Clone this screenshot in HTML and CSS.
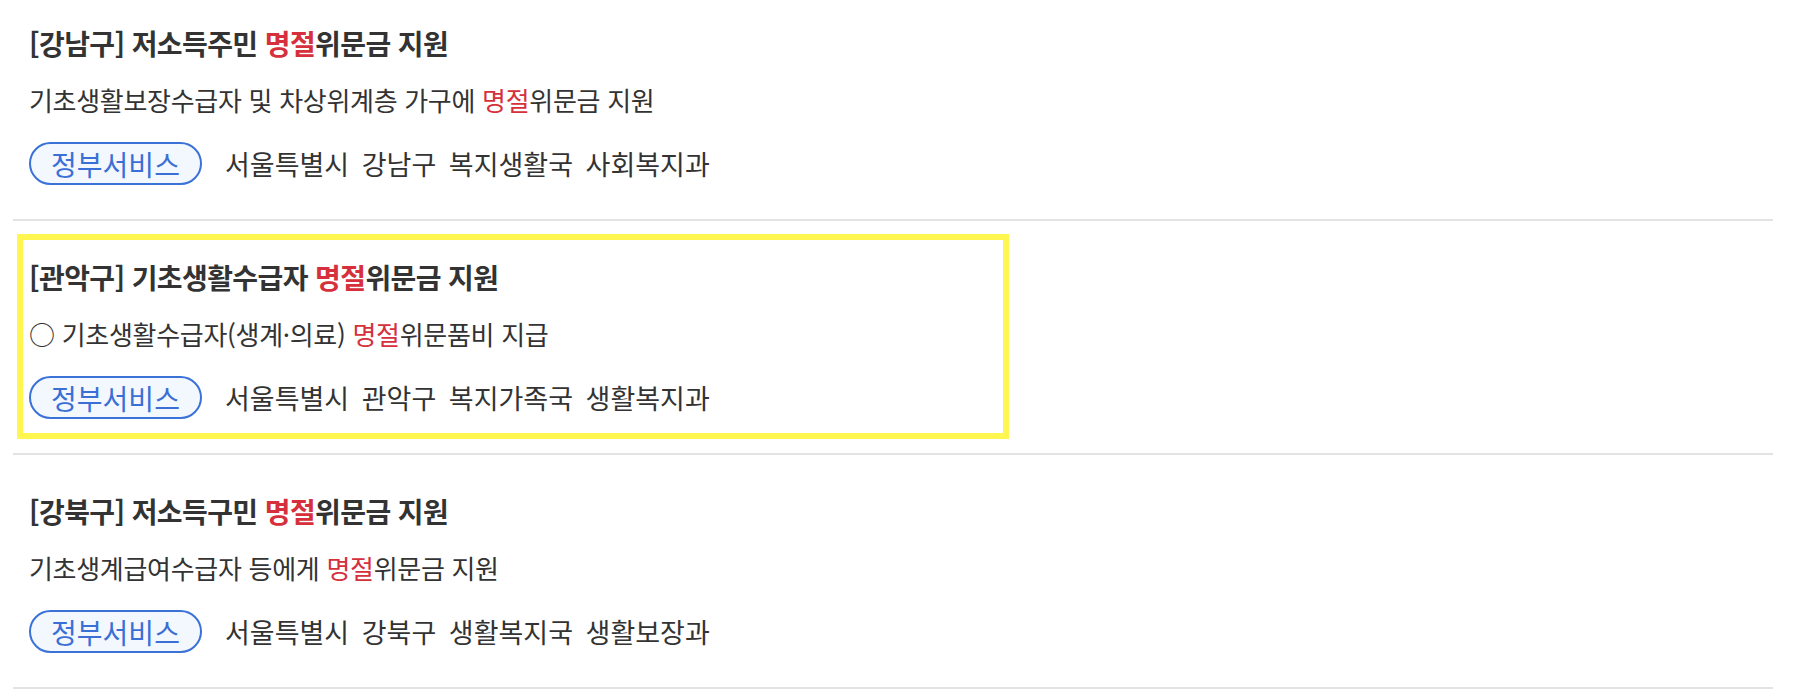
FILE: index.html
```html
<!DOCTYPE html>
<html lang="ko">
<head>
<meta charset="utf-8">
<title>명절위문금 검색 결과</title>
<link rel="stylesheet" href="styles.css">
</head>
<body>
<ul class="result-list">
  <li class="result-item">
    <a class="result-link" href="#">
      <h3 class="result-title">[강남구] 저소득주민 <em class="hl">명절</em>위문금 지원</h3>
      <p class="result-desc">기초생활보장수급자 및 차상위계층 가구에 <em class="hl">명절</em>위문금 지원</p>
      <div class="result-meta">
        <span class="badge">정부서비스</span>
        <span class="dept">서울특별시 강남구 복지생활국 사회복지과</span>
      </div>
    </a>
  </li>
  <li class="result-item">
    <a class="result-link is-focused" href="#">
      <h3 class="result-title">[관악구] 기초생활수급자 <em class="hl">명절</em>위문금 지원</h3>
      <p class="result-desc">○ 기초생활수급자(생계·의료) <em class="hl">명절</em>위문품비 지급</p>
      <div class="result-meta">
        <span class="badge">정부서비스</span>
        <span class="dept">서울특별시 관악구 복지가족국 생활복지과</span>
      </div>
    </a>
  </li>
  <li class="result-item">
    <a class="result-link" href="#">
      <h3 class="result-title">[강북구] 저소득구민 <em class="hl">명절</em>위문금 지원</h3>
      <p class="result-desc">기초생계급여수급자 등에게 <em class="hl">명절</em>위문금 지원</p>
      <div class="result-meta">
        <span class="badge">정부서비스</span>
        <span class="dept">서울특별시 강북구 생활복지국 생활보장과</span>
      </div>
    </a>
  </li>
</ul>
</body>
</html>
```

FILE: styles.css
```css
html, body {
  margin: 0;
  padding: 0;
  background: #ffffff;
  overflow: hidden;
}

body {
  font-family: "Noto Sans CJK KR", "Noto Sans", sans-serif;
  color: #333333;
}

.result-list {
  list-style: none;
  margin: -13px 0 0 13px;
  padding: 0;
  width: 1760px;
}

.result-item {
  padding: 19px 0 20px 4px;
  border-bottom: 2px solid #e3e3e3;
}

.result-link {
  display: block;
  width: 980px;
  margin-left: 6px;
  padding: 19px 0 14px 6px;
  box-sizing: border-box;
  text-decoration: none;
  color: inherit;
}

.result-link.is-focused {
  outline: 6px solid #fff650;
}

.result-title {
  margin: 0;
  font-size: 28px;
  line-height: 36px;
  font-weight: 700;
  color: #333333;
  letter-spacing: -0.6px;
  white-space: nowrap;
}

.hl {
  font-style: normal;
  color: #d6303c;
}

.result-desc {
  margin: 22px 0 0;
  font-size: 26px;
  line-height: 34px;
  color: #333333;
  letter-spacing: -0.3px;
  white-space: nowrap;
}

.result-meta {
  display: flex;
  align-items: center;
  gap: 23px;
  margin-top: 25px;
}

.badge {
  display: inline-flex;
  align-items: center;
  justify-content: center;
  box-sizing: border-box;
  width: 173px;
  height: 43px;
  border: 2px solid #3a72d8;
  border-radius: 22px;
  background: #f3f7fe;
  color: #3a6fd6;
  font-size: 28px;
  line-height: 1;
}

.dept {
  font-size: 27px;
  line-height: 34px;
  word-spacing: 5px;
  color: #333333;
  white-space: nowrap;
}
```
